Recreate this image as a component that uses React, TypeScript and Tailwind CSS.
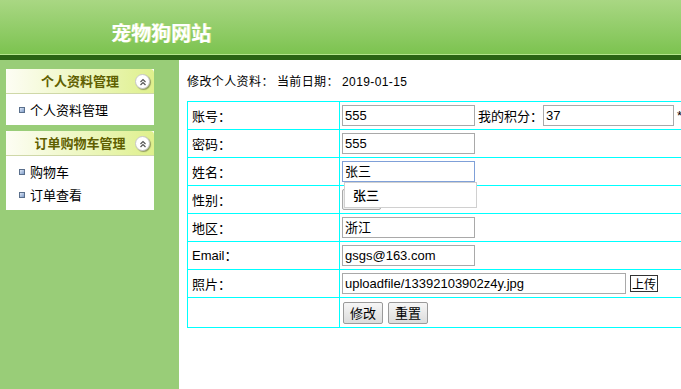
import React from 'react';

const cjk = { fontFamily: '"Noto Sans CJK SC", "Liberation Sans", sans-serif' };
const latin = { fontFamily: '"Liberation Sans", "Noto Sans CJK SC", sans-serif' };

function UpIcon() {
    return (
        <span className="flex h-[15px] w-[15px] items-center justify-center rounded-full border border-[#c8c8c8] bg-white shadow-[1px_1px_1px_rgba(0,0,0,0.35)]">
            <svg width="8" height="8" viewBox="0 0 8 8" fill="none" stroke="#555" strokeWidth="1.2">
                <path d="M1.5 4 L4 1.5 L6.5 4" />
                <path d="M1.5 7 L4 4.5 L6.5 7" />
            </svg>
        </span>
    );
}

function Panel({ title, items }: { title: string; items: string[] }) {
    return (
        <div className="w-[148px] bg-white">
            <div className="relative flex h-[25px] items-center justify-center rounded-t-[4px] border-b border-[#cfd8a8] bg-gradient-to-r from-[#fdfdf4] to-[#dff08c]">
                <span className="text-[13px] font-bold text-[#5f5f00]" style={cjk}>{title}</span>
                <span className="absolute right-[4px] top-[5px]"><UpIcon /></span>
            </div>
            <ul className="py-[4px]">
                {items.map((t) => (
                    <li key={t} className="flex h-[23px] items-center pl-[13px] text-[13px] text-black" style={cjk}>
                        <span className="mr-[5px] h-[6px] w-[6px] border border-[#5a6f8c] bg-gradient-to-br from-[#dfe8f6] to-[#7f9cc8]" />
                        {t}
                    </li>
                ))}
            </ul>
        </div>
    );
}

function Field({ value, w = 'w-[133px]', focus = false }: { value: string; w?: string; focus?: boolean }) {
    return (
        <div
            className={`flex h-[21px] shrink-0 items-center border px-[2px] text-[13px] text-black ${w} ${focus ? 'border-[#7fa0d8]' : 'border-[#a9a9a9]'}`}
            style={latin}
        >
            {value}
        </div>
    );
}

function Btn({ label }: { label: string }) {
    return (
        <span className="flex h-[22px] w-[40px] items-center justify-center rounded-[2px] border border-[#9a9a9a] bg-gradient-to-b from-[#f6f6f6] to-[#dcdcdc] text-[13px] text-black" style={cjk}>
            {label}
        </span>
    );
}

// separate borders: table draws left/top, each cell draws right/bottom
const td1 = 'border-r border-b border-[#00ffff] pl-[4px] text-[13px] text-black align-middle';
const td2 = 'border-r border-b border-[#00ffff] pl-[2px] align-middle';

export default function App() {
    return (
        <div className="flex h-[389px] w-[681px] flex-col overflow-hidden bg-white" style={cjk}>
            <header className="h-[54px] shrink-0 bg-gradient-to-b from-[#a9d783] to-[#7cc34f] pl-[111px] pt-[18px]">
                <h1 className="text-[20px] font-bold leading-[30px] text-white [text-shadow:1px_0_0_rgba(255,250,180,0.6)]">宠物狗网站</h1>
            </header>
            <div className="h-[1px] shrink-0 bg-[#b4e68c]" />
            <div className="h-[5px] shrink-0 bg-[#2a6414]" />
            <div className="flex flex-1">
                <aside className="flex w-[179px] shrink-0 flex-col gap-[6px] bg-[#99cd78] pl-[6px] pt-[9px]">
                    <Panel title="个人资料管理" items={['个人资料管理']} />
                    <Panel title="订单购物车管理" items={['购物车', '订单查看']} />
                </aside>
                <main className="flex-1 pl-[8px] pt-[12px]">
                    <p className="h-[29px] text-[12px] tracking-[0.4px] text-black">修改个人资料： 当前日期： <span style={latin}>2019-01-15</span></p>
                    <table className="w-[560px] border-separate border-spacing-0 border-l border-t border-[#00ffff]">
                        <tbody>
                            <tr className="h-[28px]">
                                <td className={`${td1} w-[152px]`}>账号：</td>
                                <td className={td2}>
                                    <div className="flex items-center">
                                        <Field value="555" />
                                        <span className="ml-[3px] w-[65px] shrink-0 whitespace-nowrap text-[13px]">我的积分：</span>
                                        <Field value="37" w="w-[131px]" />
                                        <span className="ml-[3px] text-[13px]" style={latin}>*</span>
                                    </div>
                                </td>
                            </tr>
                            <tr className="h-[28px]">
                                <td className={td1}>密码：</td>
                                <td className={td2}><Field value="555" /></td>
                            </tr>
                            <tr className="h-[28px]">
                                <td className={td1}>姓名：</td>
                                <td className={td2}>
                                    <div className="relative">
                                        <Field value="张三" focus />
                                        <div className="absolute left-[2px] top-[21px] z-10 flex h-[26px] w-[133px] items-center border border-[#d0d0d0] bg-white pl-[8px] text-[13px] font-medium text-black">张三</div>
                                    </div>
                                </td>
                            </tr>
                            <tr className="h-[28px]">
                                <td className={td1}>性别：</td>
                                <td className={td2}>
                                    <div className="h-[21px] w-[39px] rounded-[2px] border border-[#a9a9a9] bg-[#eeeeee]" />
                                </td>
                            </tr>
                            <tr className="h-[28px]">
                                <td className={td1}>地区：</td>
                                <td className={td2}><Field value="浙江" /></td>
                            </tr>
                            <tr className="h-[28px]">
                                <td className={td1}><span style={latin}>Email</span>：</td>
                                <td className={td2}><Field value="gsgs@163.com" /></td>
                            </tr>
                            <tr className="h-[28px]">
                                <td className={td1}>照片：</td>
                                <td className={td2}>
                                    <div className="flex items-center">
                                        <Field value="uploadfile/13392103902z4y.jpg" w="w-[284px]" />
                                        <span className="ml-[4px] flex h-[17px] items-center border border-[#333] bg-white px-[1px] text-[12px] leading-none text-black">上传</span>
                                    </div>
                                </td>
                            </tr>
                            <tr className="h-[30px]">
                                <td className={td1}></td>
                                <td className={`${td2} pl-[3px]`}>
                                    <div className="flex gap-[5px]">
                                        <Btn label="修改" />
                                        <Btn label="重置" />
                                    </div>
                                </td>
                            </tr>
                        </tbody>
                    </table>
                </main>
            </div>
        </div>
    );
}
